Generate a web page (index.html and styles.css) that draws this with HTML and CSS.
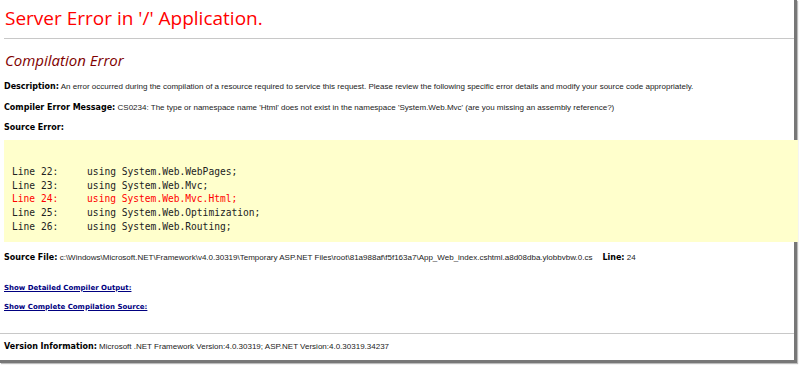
FILE: index.html
```html
<!DOCTYPE html>
<html lang="en">
<head>
  <meta charset="UTF-8" />
  <title>Compilation Error</title>
  <link rel="stylesheet" href="styles.css">
</head>
<body>
<div class="page">
  <h1>Server Error in '/' Application.</h1>
  <hr>
  <h2>Compilation Error</h2>
  <p><b>Description:</b> An error occurred during the compilation of a resource required to service this request. Please review the following specific error details and modify your source code appropriately.</p>
  <p><b>Compiler Error Message:</b> CS0234: The type or namespace name 'Html' does not exist in the namespace 'System.Web.Mvc' (are you missing an assembly reference?)</p>
  <p class="before-code"><b>Source Error:</b></p>
  <pre class="code">

Line 22:     using System.Web.WebPages;
Line 23:     using System.Web.Mvc;
<span class="hit">Line 24:     using System.Web.Mvc.Html;</span>
Line 25:     using System.Web.Optimization;
Line 26:     using System.Web.Routing;</pre>
  <p class="file"><b>Source File:</b> c:\Windows\Microsoft.NET\Framework\v4.0.30319\Temporary ASP.NET Files\root\81a988af\f5f163a7\App_Web_index.cshtml.a8d08dba.ylobbvbw.0.cs<span class="gap"></span><b>Line:</b> 24</p>
  <div class="links">
    <a href="#">Show Detailed Compiler Output:</a>
    <a href="#">Show Complete Compilation Source:</a>
  </div>
  <hr class="bottom">
  <p><b>Version Information:</b> Microsoft .NET Framework Version:4.0.30319; ASP.NET Version:4.0.30319.34237</p>
</div>
</body>
</html>
```

FILE: styles.css
```css
* { box-sizing: border-box; margin: 0; padding: 0; }
html, body { height: 100%; background: #fff; overflow: hidden; }
body { font-family: 'Liberation Sans', Arial, sans-serif; font-size: 8px; color: #222; }
.page { width: 797px; height: 363px; border-right: 3px solid #777; border-bottom: 3px solid #777; padding: 4px 0 0 4px; box-shadow: 1px 1px 1px #bbb; }
h1 { font-family: 'Open Sans', 'Segoe UI', sans-serif; font-weight: normal; font-size: 19px; line-height: 28px; color: #f00; padding-left: 1px; }
hr { border: none; border-top: 1px solid #c8c8c8; margin: 6px 0 0 0; }
h2 { font-family: 'Open Sans', 'Segoe UI', sans-serif; font-weight: normal; font-style: italic; font-size: 15px; line-height: 20px; color: #800000; margin: 11px 0 12px 1px; }
p { line-height: 10px; margin-bottom: 10.5px; }
p.before-code { margin-bottom: 7px; }
b { font-family: 'DejaVu Sans', Verdana, sans-serif; font-weight: bold; color: #000; }
.code { background: #ffffcc; margin-right: -4px; padding: 11px 8px 8px 8px; font-family: 'DejaVu Sans Mono', Consolas, monospace; font-size: 9.6px; line-height: 13.8px; color: #222; }
.hit { color: #f00; }
.file { margin-top: 11px; }
.gap { display: inline-block; width: 10px; }
.links { display: flex; flex-direction: column; gap: 9px; margin-top: 20px; }
.links a { font-family: 'DejaVu Sans', Verdana, sans-serif; font-weight: bold; color: #000080; text-decoration: underline; font-size: 7px; line-height: 10px; }
hr.bottom { margin: 21px 0 8px -4px; }
```
